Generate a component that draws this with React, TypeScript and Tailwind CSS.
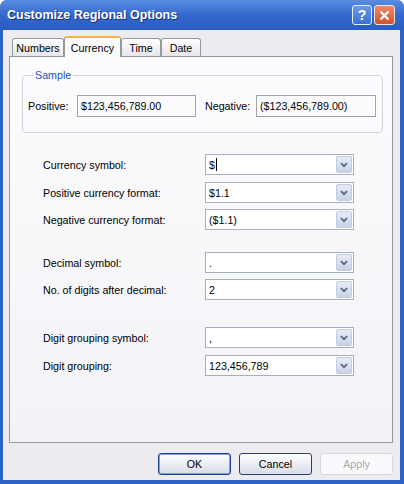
import React from "react";

function Chevron() {
  return (
    <svg width="8" height="6" viewBox="0 0 8 6">
      <path d="M1 1.2 L4 4.2 L7 1.2" fill="none" stroke="#566889" strokeWidth="1.8" />
    </svg>
  );
}

function Combo({ value, caret }: { value: string; caret?: boolean }) {
  return (
    <div className="w-[149px] h-[21px] border border-[#A7AFBE] bg-white flex items-stretch">
      <div className="flex-1 flex items-center pl-[3px] text-black">
        {value}
        {caret && <span className="w-px h-[13px] bg-black ml-px" />}
      </div>
      <div className="w-[16px] m-px rounded-[2px] border border-[#C3CCDF] bg-gradient-to-b from-[#E6EBF5] to-[#C9D2E6] flex items-center justify-center">
        <Chevron />
      </div>
    </div>
  );
}

function Row({ label, value, mt, caret }: { label: string; value: string; mt: string; caret?: boolean }) {
  return (
    <div className={`flex items-center pl-[33px] ${mt}`}>
      <span className="w-[162px]">{label}</span>
      <Combo value={value} caret={caret} />
    </div>
  );
}

function Tab({ label, w, active }: { label: string; w: string; active?: boolean }) {
  if (active) {
    return (
      <div
        className={`${w} h-[21px] -mb-px z-10 flex items-center justify-center border-x border-[#919B9C] rounded-t-[3px] border-t-2 border-t-[#F2B33D] bg-[#FCFCFE]`}
      >
        {label}
      </div>
    );
  }
  return (
    <div
      className={`${w} h-[18px] flex items-center justify-center border border-b-0 border-[#919B9C] rounded-t-[3px] bg-gradient-to-b from-[#FFFFFF] to-[#E6E6EC]`}
    >
      {label}
    </div>
  );
}

export default function App() {
  return (
    <div className="w-[404px] h-[484px] flex flex-col bg-[#2F62C7] rounded-t-[7px] overflow-hidden font-['Liberation_Sans',Arial,sans-serif] text-[10.7px] text-black leading-[14px]">
      {/* title bar */}
      <div className="h-[30px] flex items-center pl-[7px] pr-[9px] bg-gradient-to-b from-[#5B8DE2] via-[#3368CC] to-[#2B5CC2]">
        <span className="text-white font-bold text-[12.5px] [text-shadow:1px_1px_#17307A]">Customize Regional Options</span>
        <div className="ml-auto flex gap-[2px]">
          <div className="w-[20px] h-[20px] rounded-[3px] border border-[#E8EEF8] bg-gradient-to-b from-[#6A9AEA] to-[#3C6FD2] flex items-center justify-center text-white font-bold text-[14px]">
            ?
          </div>
          <div className="w-[21px] h-[20px] rounded-[3px] border border-[#F4E4DC] bg-gradient-to-b from-[#EE8A66] to-[#D5502E] flex items-center justify-center">
            <svg width="11" height="11" viewBox="0 0 11 11">
              <path d="M1.5 1.5 L9.5 9.5 M9.5 1.5 L1.5 9.5" stroke="white" strokeWidth="2.2" />
            </svg>
          </div>
        </div>
      </div>

      {/* body */}
      <div className="flex-1 ml-[3px] mr-[4px] mb-[4px] bg-[#ECECF0] flex flex-col pl-[6px] pr-[7px] pt-[6px]">
        <div className="h-[20px] flex items-end pl-[3px]">
          <Tab label="Numbers" w="w-[52px]" />
          <Tab label="Currency" w="w-[57px]" active />
          <Tab label="Time" w="w-[40px]" />
          <Tab label="Date" w="w-[40px]" />
        </div>

        <div className="h-[387px] border border-[#919B9C] bg-gradient-to-b from-[#FCFCFE] to-[#F3F3F7] flex flex-col">
          <fieldset className="mt-[11px] ml-[12px] mr-[9px] border border-[#D3D3DC] rounded-[4px] pt-[13px] pb-[15px] pl-[5px]">
            <legend className="ml-[5px] px-[2px] text-[#1F4FC0]">Sample</legend>
            <div className="flex items-center">
              <span className="w-[49px]">Positive:</span>
              <div className="w-[119px] h-[22px] border border-[#9EA3AC] flex items-center pl-[3px]">$123,456,789.00</div>
              <span className="ml-[9px] w-[51px]">Negative:</span>
              <div className="w-[120px] h-[22px] border border-[#9EA3AC] flex items-center pl-[3px]">($123,456,789.00)</div>
            </div>
          </fieldset>

          <Row label="Currency symbol:" value="$" caret mt="mt-[21px]" />
          <Row label="Positive currency format:" value="$1.1" mt="mt-[7px]" />
          <Row label="Negative currency format:" value="($1.1)" mt="mt-[6px]" />
          <Row label="Decimal symbol:" value="." mt="mt-[22px]" />
          <Row label="No. of digits after decimal:" value="2" mt="mt-[6px]" />
          <Row label="Digit grouping symbol:" value="," mt="mt-[27px]" />
          <Row label="Digit grouping:" value="123,456,789" mt="mt-[7px]" />
        </div>

        <div className="mt-[10px] flex justify-end gap-[8px]">
          <div className="w-[73px] h-[22px] rounded-[3px] border border-[#1F3F86] shadow-[inset_0_0_0_1px_#7FA0E4] bg-gradient-to-b from-[#FFFFFF] to-[#D7DCE8] flex items-center justify-center">
            OK
          </div>
          <div className="w-[73px] h-[22px] rounded-[3px] border border-[#2E3F66] bg-gradient-to-b from-[#FFFFFF] to-[#D7DCE8] flex items-center justify-center">
            Cancel
          </div>
          <div className="w-[73px] h-[22px] rounded-[3px] border border-[#D6D6DE] bg-[#FAFAFC] text-[#A9A9B2] flex items-center justify-center">
            Apply
          </div>
        </div>
      </div>
    </div>
  );
}
